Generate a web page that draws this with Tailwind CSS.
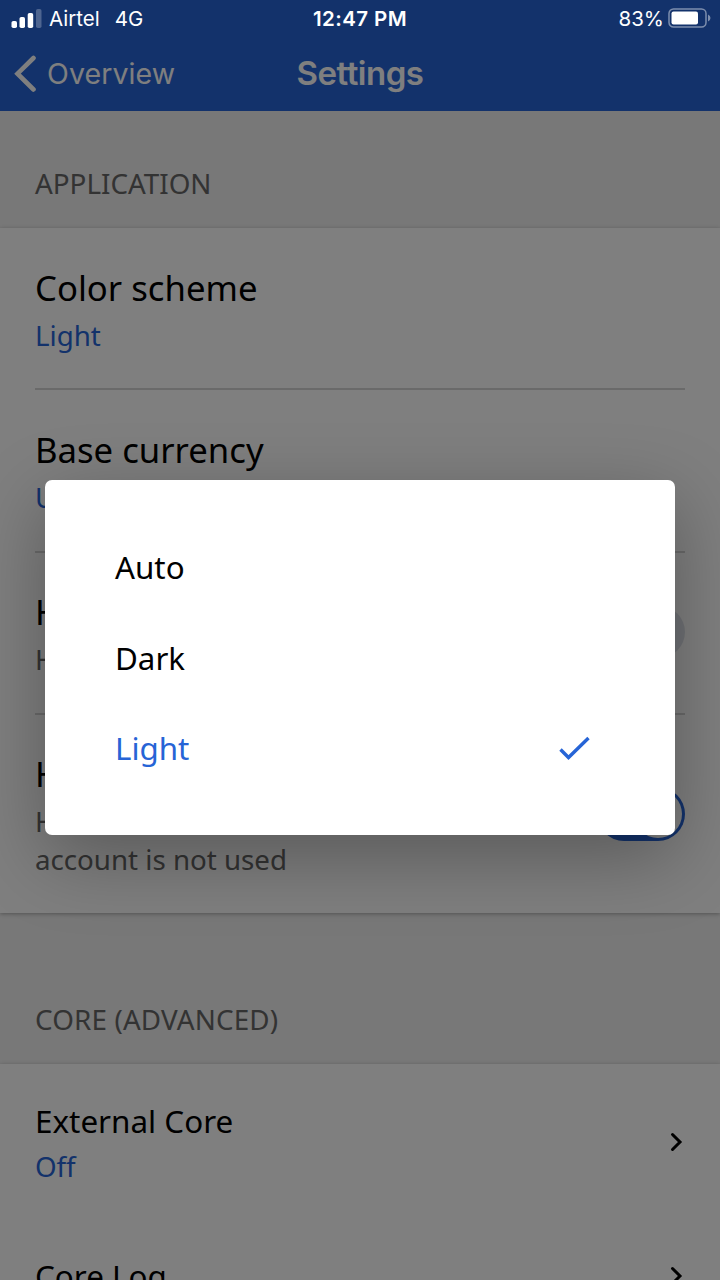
<!DOCTYPE html>
<html lang="en">
<head>
<meta charset="utf-8">
<title>Settings</title>
<script src="https://cdn.jsdelivr.net/npm/@tailwindcss/browser@4"></script>
</head>
<body class="relative h-[1280px] w-[720px] overflow-hidden bg-[#f0f0f0] font-['Noto_Sans',sans-serif] text-black">
  <!-- Navigation bar -->
  <header class="flex h-[111px] items-end bg-[#2664d6] font-['Inter',sans-serif] text-white">
    <div class="grid h-[74px] w-full grid-cols-3 items-center">
      <div class="flex items-center gap-[10px] pl-[14px]">
        <svg class="h-[38px] w-[23px]" viewBox="0 0 23 38" fill="none" stroke="currentColor" stroke-width="4.6" stroke-linecap="round" stroke-linejoin="miter"><path d="M19.5 3 3.5 18.7 19.5 34.500"/></svg>
        <span class="text-[28.500px] font-normal leading-9 tracking-[0.1px]">Overview</span>
      </div>
      <h1 class="pb-[2px] text-center text-[33px] font-semibold leading-9 tracking-[-0.5px]">Settings</h1>
    </div>
  </header>

  <main>
    <h2 class="flex h-[117px] items-end px-[35px] pb-[26px] text-[27.800px] leading-[38px] text-[#666]">APPLICATION</h2>
    <section class="h-[685px] bg-white px-[35px] shadow-[0_1px_4px_rgba(0,0,0,0.3)]">
      <div class="h-[162px] border-b-2 border-[#d4d4d4] pt-[36px]">
        <div class="text-[34.700px] leading-[48px]">Color scheme</div>
        <div class="mt-[4px] text-[27.700px] leading-[38px] text-[#2664d6]">Light</div>
      </div>
      <div class="h-[162.500px] border-b-2 border-[#d4d4d4] pt-[36px]">
        <div class="text-[34.700px] leading-[48px]">Base currency</div>
        <div class="mt-[4px] text-[27.700px] leading-[38px] text-[#2664d6]">U</div>
      </div>
      <div class="flex h-[162.500px] justify-between border-b-2 border-[#d4d4d4] pt-[35px]">
        <div>
          <div class="text-[34.700px] leading-[48px]">H</div>
          <div class="mt-[4px] text-[27.700px] leading-[38px] text-[#666]">H</div>
        </div>
        <div class="mt-[18px] h-[52px] w-[88px] rounded-full bg-[#dfe3ea]"></div>
      </div>
      <div class="flex justify-between pt-[35px]">
        <div>
          <div class="text-[34.700px] leading-[48px]">H</div>
          <div class="mt-[4px] text-[27.700px] leading-[38px] text-[#666]">H<br>account is not used</div>
        </div>
        <div class="mt-[37px] flex h-[54px] w-[88px] justify-end rounded-full bg-[#2664d6] p-[3px]">
          <div class="size-[48px] rounded-full bg-white"></div>
        </div>
      </div>
    </section>

    <h2 class="flex h-[151px] items-end px-[35px] pb-[26px] text-[27.800px] leading-[38px] tracking-[0.15px] text-[#666]">CORE (ADVANCED)</h2>
    <section class="h-[240px] bg-white px-[35px] shadow-[0_1px_4px_rgba(0,0,0,0.3)]">
      <div class="flex h-[156px] items-center justify-between">
        <div>
          <div class="text-[31.400px] leading-[44px]">External Core</div>
          <div class="mt-[4px] text-[27.700px] leading-[38px] text-[#2664d6]">Off</div>
        </div>
        <svg class="h-[20px] w-[16px]" viewBox="0 0 16 20" fill="none" stroke="currentColor" stroke-width="3" stroke-linecap="round"><path d="M3.500 2.500 11 10 3.500 17.500"/></svg>
      </div>
      <div class="flex h-[112px] items-center justify-between">
        <div class="text-[31.400px] leading-[44px]">Core Log</div>
        <svg class="h-[20px] w-[16px]" viewBox="0 0 16 20" fill="none" stroke="currentColor" stroke-width="3" stroke-linecap="round"><path d="M3.500 2.500 11 10 3.500 17.500"/></svg>
      </div>
    </section>
  </main>

  <!-- Dimmed backdrop with the option dialog -->
  <div class="absolute inset-0 bg-black/50 pt-[480px]">
    <div role="dialog" class="ml-[45px] flex h-[354.500px] w-[629.500px] flex-col rounded-[7px] bg-white pt-[42px] pr-[84px] pl-[70px] text-[31.300px] leading-[44px] shadow-[0_22px_76px_rgba(0,0,0,0.3)]">
      <div class="flex h-[90.500px] items-center">Auto</div>
      <div class="flex h-[90.500px] items-center">Dark</div>
      <div class="flex h-[90.500px] items-center justify-between text-[#2664d6]">
        <span>Light</span>
        <svg class="h-[26px] w-[32px]" viewBox="0 0 32 26" fill="none" stroke="currentColor" stroke-width="3.400"><path d="M1.500 14.500 9.500 22.500 29.500 3"/></svg>
      </div>
    </div>
  </div>

  <!-- Status bar -->
  <div class="absolute inset-x-0 top-0 grid h-[37px] grid-cols-3 items-center font-['Inter',sans-serif] text-[20.500px] text-white">
    <div class="flex items-center pl-[11px]">
      <svg class="h-[19px] w-[31px]" viewBox="0 0 31 19" fill="currentColor"><rect x=".5" y="12" width="5.500" height="7" rx="1.800"/><rect x="8.500" y="8" width="5.500" height="11" rx="1.800"/><rect x="16.700" y="4" width="5.500" height="15" rx="1.800"/><rect x="25" y="0" width="5.500" height="19" rx="1.800" opacity=".25"/></svg>
      <span class="ml-[7px] pt-px">Airtel</span><span class="ml-[15px] pt-px">4G</span>
    </div>
    <div class="pt-px text-center font-semibold tracking-[0.4px]">12:47 PM</div>
    <div class="flex items-center justify-end gap-[4px] pr-[9px]">
      <span class="pt-px">83%</span>
      <svg class="mb-[2px] h-[20px] w-[43px]" viewBox="0 0 43 20"><rect x="1" y="1" width="37" height="18" rx="4.500" fill="none" stroke="#fff" stroke-opacity=".45" stroke-width="1.500"/><rect x="3.500" y="3.500" width="26.500" height="13" rx="2" fill="#fff"/><path d="M40 6.500q2.500 1 2.500 3.500t-2.500 3.500z" fill="#fff" fill-opacity=".45"/></svg>
    </div>
  </div>
</body>
</html>
